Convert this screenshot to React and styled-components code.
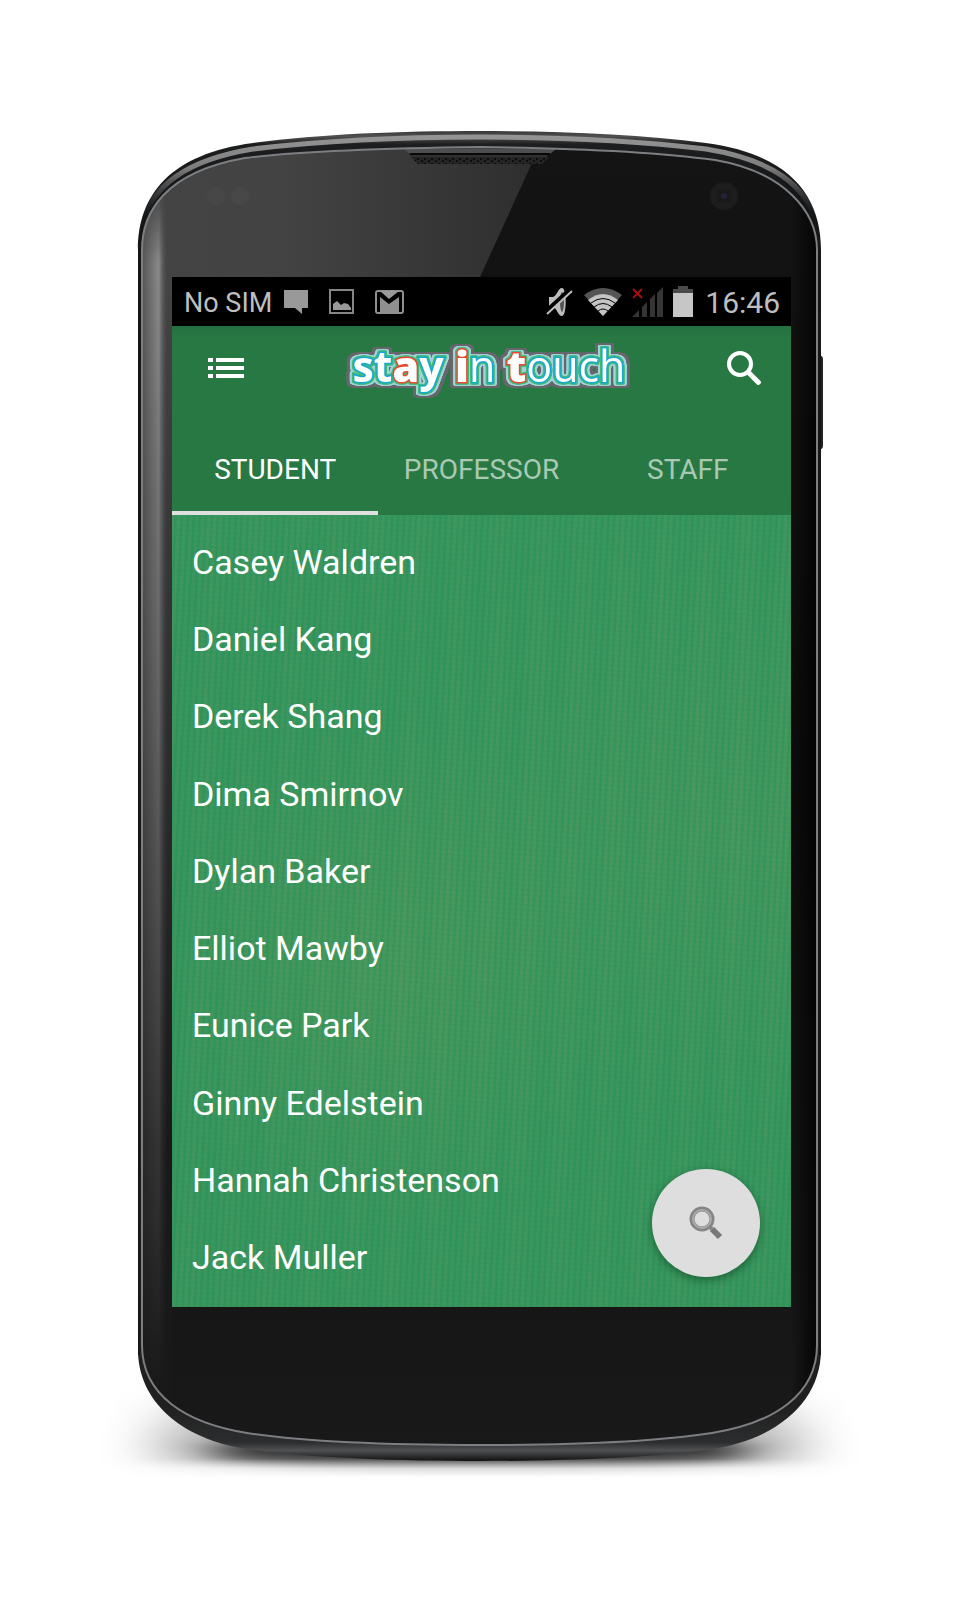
import React from "react";
import styled, { createGlobalStyle } from "styled-components";

const GlobalStyle = createGlobalStyle`
  * { box-sizing: border-box; }
  body { margin: 0; background: #fff; font-family: Roboto, "Liberation Sans", sans-serif; }
`;

const Page = styled.main`
  display: flex;
  justify-content: center;
  padding: 120px 0 110px;
`;

const Device = styled.div`
  display: grid;
  width: 100%;
  max-width: 799px;
  grid-template-columns: 92px minmax(0, 1fr) 88px;
  grid-template-rows: 157px auto 183px;
`;

const Shell = styled.svg`
  grid-area: 1 / 1 / -1 / -1;
  width: 100%;
  height: 100%;
`;

const Screen = styled.section`
  grid-area: 2 / 2;
  position: relative;
  display: flex;
  flex-direction: column;
  overflow: hidden;
  background: #2e935a;
`;

const StatusBar = styled.div`
  display: flex;
  align-items: center;
  justify-content: space-between;
  height: 49px;
  padding: 0 11px 0 12px;
  background: #000;
  color: #bebebe;
`;

const StatusGroup = styled.div`
  display: flex;
  align-items: center;
  gap: ${(p) => p.$gap}px;
`;

const Carrier = styled.span`
  font-size: 27px;
  line-height: 32px;
  padding-top: 2px;
`;

const Clock = styled.time`
  font-size: 30px;
  line-height: 36px;
  padding-top: 2px;
  margin-left: 2px;
`;

const Header = styled.header`
  background: linear-gradient(#24713f, #287843 12px);
`;

const AppBar = styled.div`
  display: grid;
  grid-template-columns: 52px 1fr 52px;
  align-items: center;
  justify-items: center;
  height: 84px;
  padding: 0 21px 0 28px;
`;

const IconButton = styled.button`
  display: grid;
  place-items: center;
  width: 52px;
  height: 52px;
  padding: 0;
  border: 0;
  background: none;
  color: #fff;
`;

const Logo = styled.h1`
  margin: 0;
  padding: 0 0 4px 8px;
  font-family: "Open Sans", "Noto Sans", sans-serif;
  font-size: 43px;
  line-height: 52px;
  font-weight: 400;
  color: #fff;
  white-space: nowrap;
  filter:
    drop-shadow(1px 0 #43b979) drop-shadow(-1px 0 #43b979)
    drop-shadow(0 1px #43b979) drop-shadow(0 -1px #43b979)
    drop-shadow(2px 0 #9fd3d8) drop-shadow(-2px 0 #9fd3d8)
    drop-shadow(0 1px #9fd3d8) drop-shadow(0 -1px #9fd3d8)
    drop-shadow(3px 0 #66666c) drop-shadow(-3px 0 #66666c)
    drop-shadow(0 2px #66666c) drop-shadow(0 -2px #66666c);
`;

const LogoPart = styled.span`
  font-weight: ${(p) => p.$weight};
  -webkit-text-stroke: 3px ${(p) => (p.$accent ? "#e8492f" : "#16a9cf")};
  paint-order: stroke fill;
`;

const Tabs = styled.nav`
  display: grid;
  grid-template-columns: repeat(3, 1fr);
  height: 105px;
`;

const Tab = styled.button`
  padding: 25px 0 7px;
  border: 0;
  border-bottom: 4px solid ${(p) => (p.$active ? "#e0e0e0" : "transparent")};
  background: none;
  color: ${(p) => (p.$active ? "#fff" : "#a9c9b4")};
  font-family: inherit;
  font-size: 28px;
  line-height: 32px;
`;

const People = styled.ul`
  display: grid;
  grid-auto-rows: 1fr;
  min-height: 792px;
  margin: 0;
  padding: 8px 0 11px;
  list-style: none;
  background:
    repeating-linear-gradient(4deg, rgba(20, 145, 85, 0.14) 0 1px, transparent 2px 5px),
    repeating-linear-gradient(93deg, rgba(84, 152, 98, 0.3) 0 2px, rgba(30, 146, 86, 0.4) 4px, rgba(84, 152, 98, 0.3) 6px),
    repeating-linear-gradient(92deg, rgba(90, 155, 98, 0.14) 0, rgba(30, 146, 88, 0.14) 23px, rgba(90, 155, 98, 0.14) 41px),
    radial-gradient(ellipse at 35% 58%, rgba(86, 152, 90, 0.7), transparent 40%),
    radial-gradient(ellipse at 90% 40%, rgba(80, 152, 94, 0.6), transparent 45%),
    #34945c;
`;

const Person = styled.li`
  display: flex;
  align-items: center;
  padding: 0 20px;
  color: #fff;
  font-size: 34px;
  line-height: 40px;
`;

const Fab = styled.button`
  position: absolute;
  right: 31px;
  bottom: 30px;
  display: grid;
  place-items: center;
  width: 108px;
  height: 108px;
  padding: 0;
  border: 0;
  border-radius: 50%;
  background: #dedede;
  box-shadow: 0 3px 8px rgba(0, 40, 10, 0.45);
`;

const OUTER =
  "M138 250 C138 195 170 154 253 143 C320 134 400 131 480 131 C560 131 639 134 706 143 C789 154 821 195 821 250 V1350 C821 1400 779 1439 712 1449 C654 1458 560 1461 480 1461 C400 1461 305 1458 247 1449 C180 1439 138 1400 138 1350 Z";
const RIM =
  "M142 250 C142 212 165 172 245 158 C310 150 395 148 480 147 C565 148 650 151 715 160 C785 172 817 212 817 250 V1345 C817 1395 774 1423 712 1433 C654 1442 565 1445 480 1445 C395 1445 305 1442 247 1433 C185 1423 142 1395 142 1345 Z";

function PhoneShell() {
  return (
    <Shell viewBox="80 120 799 1370" preserveAspectRatio="none" aria-hidden="true">
      <defs>
        <linearGradient id="edge" x1="0" y1="0" x2="0" y2="1">
          <stop offset="0" stopColor="#383838" />
          <stop offset="0.004" stopColor="#505050" />
          <stop offset="0.01" stopColor="#1d1e1f" />
          <stop offset="0.05" stopColor="#151617" />
          <stop offset="0.96" stopColor="#202020" />
          <stop offset="0.986" stopColor="#2c2d2e" />
          <stop offset="0.992" stopColor="#505153" />
          <stop offset="1" stopColor="#101010" />
        </linearGradient>
        <linearGradient id="face" x1="0" y1="0" x2="0" y2="1">
          <stop offset="0" stopColor="#141414" />
          <stop offset="0.5" stopColor="#0d0d0d" />
          <stop offset="1" stopColor="#191919" />
        </linearGradient>
        <linearGradient id="glare" x1="142" y1="0" x2="540" y2="0" gradientUnits="userSpaceOnUse">
          <stop offset="0" stopColor="#444" />
          <stop offset="0.35" stopColor="#434343" />
          <stop offset="1" stopColor="#2e2e2e" />
        </linearGradient>
        <linearGradient id="glareFade" x1="0" y1="277" x2="0" y2="1300" gradientUnits="userSpaceOnUse">
          <stop offset="0" stopColor="#191919" stopOpacity="0" />
          <stop offset="0.85" stopColor="#191919" />
        </linearGradient>
        <linearGradient id="leftShine" x1="142" y1="0" x2="168" y2="0" gradientUnits="userSpaceOnUse">
          <stop offset="0" stopColor="#555" />
          <stop offset="0.65" stopColor="#8a8a8a" />
          <stop offset="1" stopColor="#454545" stopOpacity="0" />
        </linearGradient>
        <linearGradient id="shineMask" x1="0" y1="190" x2="0" y2="1390" gradientUnits="userSpaceOnUse">
          <stop offset="0" stopColor="#000" />
          <stop offset="0.06" stopColor="#fff" />
          <stop offset="0.25" stopColor="#bbb" />
          <stop offset="0.85" stopColor="#333" />
          <stop offset="1" stopColor="#000" />
        </linearGradient>
        <linearGradient id="rightShade" x1="791" y1="0" x2="818" y2="0" gradientUnits="userSpaceOnUse">
          <stop offset="0" stopColor="#000" stopOpacity="0" />
          <stop offset="1" stopColor="#000" stopOpacity="0.8" />
        </linearGradient>
        <linearGradient id="bandShine" x1="0" y1="137" x2="0" y2="215" gradientUnits="userSpaceOnUse">
          <stop offset="0" stopColor="#949494" />
          <stop offset="0.4" stopColor="#7c7c7c" />
          <stop offset="1" stopColor="#444" stopOpacity="0" />
        </linearGradient>
        <mask id="shine" maskUnits="userSpaceOnUse" x="130" y="130" width="60" height="1330">
          <rect x="130" y="130" width="60" height="1330" fill="url(#shineMask)" />
        </mask>
        <clipPath id="faceClip"><path d={RIM} /></clipPath>
        <clipPath id="outerClip"><path d={OUTER} /></clipPath>
        <filter id="softWide" x="-30%" y="-80%" width="160%" height="260%"><feGaussianBlur stdDeviation="26" /></filter>
        <filter id="soft" x="-30%" y="-80%" width="160%" height="260%"><feGaussianBlur stdDeviation="22 7" /></filter>
        <linearGradient id="groundFade" x1="0" y1="1446" x2="0" y2="1478" gradientUnits="userSpaceOnUse">
          <stop offset="0" stopColor="#fff" />
          <stop offset="0.4" stopColor="#ccc" />
          <stop offset="0.7" stopColor="#333" />
          <stop offset="1" stopColor="#000" />
        </linearGradient>
        <mask id="ground" maskUnits="userSpaceOnUse" x="80" y="1300" width="799" height="190">
          <rect x="80" y="1300" width="799" height="190" fill="url(#groundFade)" />
        </mask>
        <pattern id="mesh" width="7" height="5" patternUnits="userSpaceOnUse">
          <rect width="7" height="5" fill="#252525" />
          <circle cx="2" cy="1" r="1" fill="#050505" />
          <circle cx="5" cy="4" r="1" fill="#050505" />
        </pattern>
      </defs>
      <g mask="url(#ground)">
        <ellipse cx="480" cy="1450" rx="335" ry="50" fill="#000" opacity="0.4" filter="url(#softWide)" />
        <ellipse cx="480" cy="1453" rx="270" ry="20" fill="#000" opacity="0.8" filter="url(#soft)" />
      </g>
      <path d="M820 356 h1 q2 0 2 4 v85 q0 4 -2 4 h-1z" fill="#222" />
      <path d={OUTER} fill="url(#edge)" />
      <g clipPath="url(#outerClip)">
        <path d="M142 222 C154 186 185 160 253 149 C320 141 400 137 480 137 C560 137 639 141 706 149 C774 160 805 186 817 222" fill="none" stroke="url(#bandShine)" strokeWidth="5" />
      </g>
      <path d="M139 245 V1355 M820 250 V1355" stroke="#161616" strokeWidth="2" />
      <g clipPath="url(#faceClip)">
        <rect x="130" y="130" width="700" height="1330" fill="url(#face)" />
        <path d="M130 130 H547 L480 277 L172 900 V1460 H130 Z" fill="url(#glare)" />
        <path d="M130 277 H172 V1460 H130 Z" fill="url(#glareFade)" />
        <rect x="141" y="150" width="27" height="1300" fill="url(#leftShine)" mask="url(#shine)" />
        <rect x="791" y="200" width="30" height="1200" fill="url(#rightShade)" />
        <path d="M400 146 C410 150 410 164 424 164 H534 C546 164 548 149 560 147 Z" fill="#303030" />
        <path d="M411 157 H549 L542 164 H418 Z" fill="url(#mesh)" />
        <path d="M404 149 H556 L550 154 H410 Z" fill="#4c4e50" />
        <path d="M410 154 H550" stroke="#080808" strokeWidth="2" />
      </g>
      <path d={RIM} fill="none" stroke="#7c7e81" strokeWidth="2" />
      <circle cx="216" cy="196" r="9" fill="#505050" opacity="0.35" />
      <circle cx="240" cy="196" r="9" fill="#505050" opacity="0.45" />
      <circle cx="724" cy="196" r="14" fill="#1d1d1d" />
      <circle cx="724" cy="196" r="7" fill="#18181d" />
      <circle cx="724" cy="196" r="3" fill="#222238" />
    </Shell>
  );
}

function StatusIcons() {
  return (
    <StatusGroup $gap={21}>
      <StatusGroup $gap={12}>
        <Carrier>No SIM</Carrier>
        <svg width="24" height="24" viewBox="0 0 24 24" aria-hidden="true">
          <path d="M0 0h24v18h-6v6l-7-6H0z" fill="#999" />
        </svg>
      </StatusGroup>
      <svg width="25" height="25" viewBox="0 0 25 25" aria-hidden="true">
        <rect x="1" y="1" width="23" height="23" fill="none" stroke="#868686" strokeWidth="2" />
        <path d="M4 21v-6l4-3 4 4 3-2 4 1 3 4v2z" fill="#999" />
      </svg>
      <svg width="29" height="24" viewBox="0 0 29 24" aria-hidden="true">
        <rect x="1" y="1" width="27" height="22" rx="2" fill="#000" stroke="#8f8f8f" strokeWidth="2" />
        <path d="M5 22V7l9 7 10-7v15z" fill="#8f8f8f" />
        <path d="M5 1h19l-10 8z" fill="#999" />
      </svg>
    </StatusGroup>
  );
}

function SystemIcons() {
  return (
    <StatusGroup $gap={10}>
      <svg width="28" height="30" viewBox="0 0 28 30" aria-hidden="true">
        <path d="M3 10h4c4-1 5-9 9-9 5 0 5 28 0 28-4 0-5-8-9-9H3z" fill="#bdbdbd" />
        <ellipse cx="16" cy="15" rx="2" ry="10" fill="#555" />
        <path d="M0 25L25 2" stroke="#000" strokeWidth="5" />
        <path d="M1 27L26 4" stroke="#bdbdbd" strokeWidth="2" />
      </svg>
      <svg width="38" height="28" viewBox="0 0 38 28" aria-hidden="true">
        <path d="M0 7Q19-7 38 7L19 28z" fill="#555" />
        <path d="M4 12Q19 0 34 12L19 28z" fill="#c4c4c4" />
        <path d="M7 15Q19 6 31 15M10 19Q19 12 28 19M14 23Q19 19 24 23" fill="none" stroke="#000" strokeWidth="1" />
      </svg>
      <svg width="31" height="30" viewBox="0 0 31 30" aria-hidden="true">
        <path d="M0 30l7-7v7zM10 20l5-5v15h-5zM18 12l5-5v23h-5zM25 6l6-6v30h-6z" fill="#353535" />
        <path d="M1 2l9 9M10 2l-9 9" stroke="#a30d0d" strokeWidth="2" />
      </svg>
      <svg width="20" height="31" viewBox="0 0 20 31" aria-hidden="true">
        <path d="M5 0h10v3h5v28H0V3h5z" fill="#4a4a4a" />
        <path d="M0 7h20v24H0z" fill="#c6c6c6" />
      </svg>
      <Clock>16:46</Clock>
    </StatusGroup>
  );
}

const people = [
  "Casey Waldren", "Daniel Kang", "Derek Shang", "Dima Smirnov", "Dylan Baker",
  "Elliot Mawby", "Eunice Park", "Ginny Edelstein", "Hannah Christenson", "Jack Muller",
];
const tabs = ["STUDENT", "PROFESSOR", "STAFF"];

export default function App() {
  const [active, setActive] = React.useState("STUDENT");
  return (
    <Page>
      <GlobalStyle />
      <Device>
        <PhoneShell />
        <Screen>
          <StatusBar>
            <StatusIcons />
            <SystemIcons />
          </StatusBar>
          <Header>
            <AppBar>
              <IconButton aria-label="Menu">
                <svg width="36" height="20" viewBox="0 0 36 20" fill="currentColor" aria-hidden="true">
                  <path d="M0 0h5v4H0zM8 0h28v4H8zM0 8h5v4H0zM8 8h28v4H8zM0 16h5v4H0zM8 16h28v4H8z" />
                </svg>
              </IconButton>
              <Logo>
                <LogoPart $weight={700}>st</LogoPart>
                <LogoPart $weight={800} $accent>a</LogoPart>
                <LogoPart $weight={700}>y</LogoPart>{" "}
                <LogoPart $weight={800} $accent>i</LogoPart>
                <LogoPart $weight={400}>n</LogoPart>{" "}
                <LogoPart $weight={800} $accent>t</LogoPart>
                <LogoPart $weight={400}>ouch</LogoPart>
              </Logo>
              <IconButton aria-label="Search">
                <svg width="34" height="34" viewBox="0 0 34 34" fill="none" stroke="currentColor" strokeWidth="4" aria-hidden="true">
                  <circle cx="13" cy="13" r="11" />
                  <path d="M21 21l12 12" strokeWidth="5" />
                </svg>
              </IconButton>
            </AppBar>
            <Tabs aria-label="Directory groups">
              {tabs.map((t) => (
                <Tab key={t} $active={t === active} onClick={() => setActive(t)}>{t}</Tab>
              ))}
            </Tabs>
          </Header>
          <People>
            {people.map((name) => <Person key={name}>{name}</Person>)}
          </People>
          <Fab aria-label="Find a person">
            <svg width="34" height="34" viewBox="0 0 34 34" fill="none" aria-hidden="true">
              <circle cx="13" cy="13" r="10" stroke="#858585" strokeWidth="5" />
              <circle cx="13" cy="13" r="9" stroke="#aaa" strokeWidth="2" />
              <path d="M20 20l3 3" stroke="#858585" strokeWidth="4" />
              <path d="M23 23l8 8" stroke="#787878" strokeWidth="6" />
            </svg>
          </Fab>
        </Screen>
      </Device>
    </Page>
  );
}
